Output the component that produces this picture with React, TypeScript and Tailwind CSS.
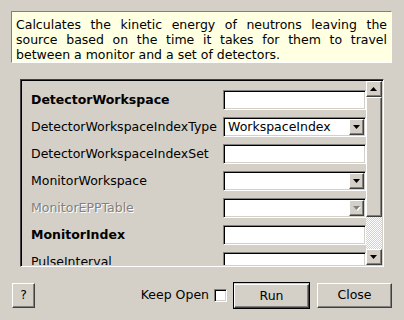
import React from 'react';

const raised = 'border border-t-white border-l-white border-r-[#404040] border-b-[#404040] shadow-[inset_-1px_-1px_0_#808080]';
const sunken = 'border border-t-[#808080] border-l-[#808080] border-r-white border-b-white shadow-[inset_1px_1px_0_#000,inset_-1px_-1px_0_#d4d0c8]';

const Arrow: React.FC<{ up?: boolean; disabled?: boolean }> = ({ up, disabled }) => (
  <svg width="8" height="5" viewBox="0 0 8 5" className="block">
    {disabled && <polygon points="1,1 8,1 4.5,5" fill="#fff" />}
    <polygon points={up ? '0,4 7,4 3.5,0' : '0,0 7,0 3.5,4'} fill={disabled ? '#808080' : '#000'} />
  </svg>
);

const TextField: React.FC = () => <div className={`w-[143px] h-[20px] bg-white ${sunken}`} />;

const Combo: React.FC<{ value?: string; disabled?: boolean }> = ({ value, disabled }) => (
  <div className={`w-[143px] h-[20px] bg-white flex items-center pl-[4px] pr-[1px] ${sunken}`}>
    <span className="flex-1 text-[12.5px] leading-none text-black">{value}</span>
    <div className={`w-[15px] h-[16px] bg-[#d4d0c8] flex items-center justify-center ${raised}`}>
      <Arrow disabled={disabled} />
    </div>
  </div>
);

const rows: { label: string; kind: 'text' | 'combo'; bold?: boolean; disabled?: boolean; value?: string }[] = [
  { label: 'DetectorWorkspace', kind: 'text', bold: true },
  { label: 'DetectorWorkspaceIndexType', kind: 'combo', value: 'WorkspaceIndex' },
  { label: 'DetectorWorkspaceIndexSet', kind: 'text' },
  { label: 'MonitorWorkspace', kind: 'combo' },
  { label: 'MonitorEPPTable', kind: 'combo', disabled: true },
  { label: 'MonitorIndex', kind: 'text', bold: true },
  { label: 'PulseInterval', kind: 'text' },
];

export default function App() {
  return (
    <div className="w-[404px] h-[320px] bg-[#d4d0c8] flex flex-col overflow-hidden font-['DejaVu_Sans',sans-serif] text-black">
      {/* description */}
      <div className="ml-[11px] mt-[11px] w-[381px] bg-[#ffffe1] border border-t-[#808080] border-l-[#808080] border-r-white border-b-white px-[4px] pt-[5px] pb-0 text-[12.5px] leading-[15px] text-justify">
        Calculates the kinetic energy of neutrons leaving the source based on the time it takes for them to travel between a monitor and a set of detectors.
      </div>

      {/* property panel */}
      <div className="ml-[20px] mt-[16px] w-[364px] h-[188px] flex p-[1px] border border-t-[#404040] border-l-[#404040] border-r-white border-b-white shadow-[inset_1px_1px_0_#000,inset_-1px_-1px_0_#d4d0c8]">
        <div className="flex-1 overflow-hidden flex flex-col gap-[7px] pt-[9px] pl-[9px]">
          {rows.map((r) => (
            <div key={r.label} className="flex items-center shrink-0">
              <span
                className={`flex-1 text-[12.5px] leading-none ${r.bold ? 'font-bold' : ''} ${r.disabled ? 'text-[#808080] [text-shadow:1px_1px_0_#fff]' : ''}`}
              >
                {r.label}
              </span>
              <div className="shrink-0">
                {r.kind === 'text' ? <TextField /> : <Combo value={r.value} disabled={r.disabled} />}
              </div>
            </div>
          ))}
        </div>
        <div className="w-[16px] flex flex-col">
          <div className={`h-[16px] bg-[#d4d0c8] flex items-center justify-center ${raised}`}>
            <Arrow up />
          </div>
          <div className={`h-[120px] bg-[#d4d0c8] ${raised}`} />
          <div className="flex-1 bg-[repeating-conic-gradient(#fff_0_25%,#d4d0c8_0_50%)] bg-[length:2px_2px]" />
          <div className={`h-[16px] bg-[#d4d0c8] flex items-center justify-center ${raised}`}>
            <Arrow />
          </div>
        </div>
      </div>

      {/* buttons */}
      <div className="flex items-center mt-[15px] pl-[12px] pr-[12px]">
        <button className={`w-[23px] h-[25px] bg-[#d4d0c8] text-[12.5px] leading-none ${raised}`}>?</button>
        <div className="flex-1" />
        <span className="text-[12.5px] leading-none">Keep Open</span>
        <div className={`ml-[5px] w-[13px] h-[13px] bg-white ${sunken}`} />
        <div className="ml-[6px] border border-black">
          <button className={`w-[75px] h-[24px] bg-[#d4d0c8] text-[12.5px] leading-none ${raised}`}>Run</button>
        </div>
        <button className={`ml-[7px] w-[75px] h-[25px] bg-[#d4d0c8] text-[12.5px] leading-none ${raised}`}>Close</button>
      </div>
    </div>
  );
}
